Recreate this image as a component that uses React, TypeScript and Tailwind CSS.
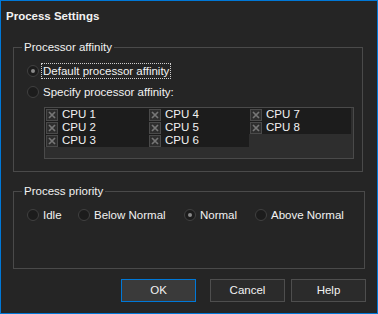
import React from "react";

const font = { fontFamily: '"Liberation Sans", Arial, sans-serif' };

function Radio({ checked, label, focus }: { checked?: boolean; label: string; focus?: boolean }) {
  return (
    <div className="flex items-center">
      <div className="w-[12px] h-[12px] rounded-full bg-[#1c1c1c] border border-[#404040] flex items-center justify-center shrink-0">
        {checked && <div className="w-[4px] h-[4px] rounded-full bg-[#8a8a8a]" />}
      </div>
      <div
        className={
          "ml-[2px] px-[1px] leading-[14px] " +
          (focus ? "border border-dotted border-[#cfcfcf]" : "border border-transparent")
        }
      >
        {label}
      </div>
    </div>
  );
}

function Check({ label }: { label: string }) {
  return (
    <div className="h-[13px] flex items-center bg-[#1c1c1c]">
      <div className="ml-[1px] w-[12px] h-[12px] bg-[#2e2e2e] border border-[#4a4a4a] flex items-center justify-center shrink-0">
        <svg width="8" height="8" viewBox="0 0 8 8">
          <path d="M1 1L7 7M7 1L1 7" stroke="#767676" strokeWidth="1.7" />
        </svg>
      </div>
      <span className="ml-[4px] leading-[13px]">{label}</span>
    </div>
  );
}

export default function App() {
  return (
    <div
      className="w-[378px] h-[314px] bg-[#252525] border border-[#0078d7] text-[#f2f2f2] text-[11.5px] flex flex-col"
      style={font}
    >
      <div className="pl-[5px] pt-[8px] text-[11.5px] font-bold leading-[15px]">Process Settings</div>

      <div className="relative ml-[12px] mt-[23px] w-[350px] h-[125px] border border-[#4a4a4a]">
        <div className="absolute -top-[9px] left-[8px] bg-[#252525] px-[2px] leading-[16px]">
          Processor affinity
        </div>
        <div className="pl-[13px] pt-[15px] flex flex-col gap-[5px]">
          <Radio checked focus label="Default processor affinity" />
          <Radio label="Specify processor affinity:" />
        </div>
        <div className="ml-[30px] mt-[7px] w-[310px] h-[52px] border border-[#4a4a4a] bg-[#2e2e2e]">
          <div className="flex">
            <div className="w-[103px] flex flex-col">
              <Check label="CPU 1" />
              <Check label="CPU 2" />
              <Check label="CPU 3" />
            </div>
            <div className="w-[101px] flex flex-col">
              <Check label="CPU 4" />
              <Check label="CPU 5" />
              <Check label="CPU 6" />
            </div>
            <div className="w-[102px] flex flex-col">
              <Check label="CPU 7" />
              <Check label="CPU 8" />
            </div>
          </div>
        </div>
      </div>

      <div className="relative ml-[12px] mt-[19px] w-[352px] h-[78px] border border-[#4a4a4a]">
        <div className="absolute -top-[9px] left-[8px] bg-[#252525] px-[2px] leading-[16px]">Process priority</div>
        <div className="flex pl-[13px] pt-[15px]">
          <div className="w-[51px]">
            <Radio label="Idle" />
          </div>
          <div className="w-[106px]">
            <Radio label="Below Normal" />
          </div>
          <div className="w-[71px]">
            <Radio checked label="Normal" />
          </div>
          <div>
            <Radio label="Above Normal" />
          </div>
        </div>
      </div>

      <div className="flex mt-[10px]">
        <button className="ml-[120px] w-[75px] h-[23px] bg-[#3a3a3a] border border-[#0078d7] leading-none">OK</button>
        <button className="ml-[14px] w-[75px] h-[23px] bg-[#2b2b2b] border border-[#4e4e4e] leading-none">Cancel</button>
        <button className="ml-[6px] w-[75px] h-[23px] bg-[#2b2b2b] border border-[#4e4e4e] leading-none">Help</button>
      </div>
    </div>
  );
}
